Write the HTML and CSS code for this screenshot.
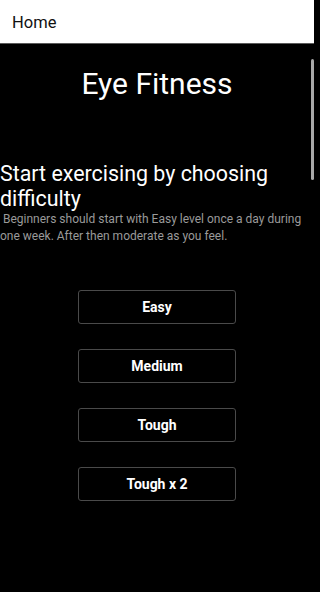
FILE: index.html
```html
<!DOCTYPE html>
<html>
<head>
<meta charset="utf-8">
<link rel="stylesheet" href="styles.css">
</head>
<body>
<header class="appbar"><span class="appbar-title">Home</span></header>
<main class="content">
  <h1 class="title">Eye Fitness</h1>
  <h2 class="heading">Start exercising by choosing difficulty</h2>
  <p class="desc">&nbsp;Beginners should start with Easy level once a day during one week. After then moderate as you feel.</p>
  <div class="buttons">
    <button class="btn">Easy</button>
    <button class="btn">Medium</button>
    <button class="btn">Tough</button>
    <button class="btn">Tough x 2</button>
  </div>
  <div class="scrollbar"></div>
</main>
</body>
</html>
```
FILE: styles.css
```css
html, body {
  margin: 0;
  padding: 0;
  background: #000;
  font-family: Roboto, "Noto Sans", sans-serif;
}
body {
  width: 314px;
  height: 592px;
  overflow: hidden;
}
.appbar {
  height: 43px;
  background: #fff;
  border-bottom: 1px solid #5a5a5a;
  display: flex;
  align-items: center;
  padding-left: 12px;
}
.appbar-title {
  font-size: 16.5px;
  color: #111;
  padding-top: 1px;
}
.content {
  position: relative;
  height: 548px;
}
.title {
  margin: 0;
  padding-top: 22px;
  text-align: center;
  font-weight: 400;
  font-size: 30px;
  line-height: 36px;
  color: #fff;
}
.heading {
  margin: 59px 0 0 0;
  font-weight: 400;
  font-size: 21.4px;
  line-height: 25px;
  color: #fff;
}
.desc {
  margin: 0;
  font-size: 12px;
  line-height: 17px;
  color: #9a9a9a;
}
.buttons {
  margin-top: 45px;
  display: flex;
  flex-direction: column;
  align-items: center;
  gap: 25px;
}
.btn {
  width: 158px;
  height: 34px;
  background: #000;
  border: 1px solid #4a4a4a;
  border-radius: 3px;
  color: #fff;
  font-family: Roboto, "Noto Sans", sans-serif;
  font-weight: 700;
  font-size: 14px;
  padding: 0;
}
.scrollbar {
  position: absolute;
  right: 0;
  top: 15px;
  width: 3px;
  height: 121px;
  border-radius: 2px;
  background: #a8a8a8;
}
```
